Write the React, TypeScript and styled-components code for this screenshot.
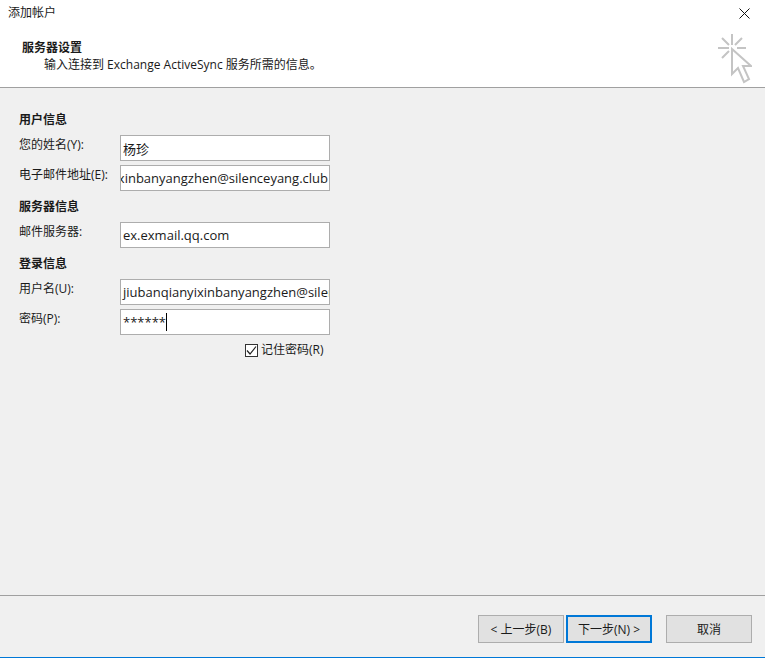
import React from 'react'
import styled, { createGlobalStyle } from 'styled-components'

const GlobalStyle = createGlobalStyle`
  html, body {
    margin: 0;
    padding: 0;
    background: #f0f0f0;
  }
  body {
    font-family: "Open Sans", "Noto Sans CJK SC", sans-serif;
    font-size: 12px;
    color: #1a1a1a;
  }
`

const App = () => {
  return (
    <>
      <GlobalStyle />
      <Dialog.Window>
        <Dialog.Top>
          <Dialog.TitleBar>
            <Dialog.Title>添加帐户</Dialog.Title>
            <Dialog.Close aria-label="close">
              <svg width="11" height="11" viewBox="0 0 11 11">
                <path d="M0.5 0.5L10.5 10.5M10.5 0.5L0.5 10.5" stroke="#111" strokeWidth="1" fill="none" />
              </svg>
            </Dialog.Close>
          </Dialog.TitleBar>
          <Dialog.Header>
            <Dialog.HeaderTitle>服务器设置</Dialog.HeaderTitle>
            <Dialog.HeaderSub>输入连接到 Exchange ActiveSync 服务所需的信息。</Dialog.HeaderSub>
            <Dialog.Cursor>
              <svg width="34" height="50" viewBox="0 0 34 50" fill="none">
                <g stroke="#c4c4c4" strokeWidth="2">
                  <path d="M14 0V11M0 14H11M19 14H28M4 4L11 11M24 4L17 11M4 24L11 17" />
                  <path d="M14 15V40L20 34L26 48L31 45L25 32H33Z" fill="#fff" />
                </g>
              </svg>
            </Dialog.Cursor>
          </Dialog.Header>
        </Dialog.Top>

        <Dialog.Body>
          <Form.Section>
            <Form.Heading>用户信息</Form.Heading>
            <Form.Row>
              <Form.Label>您的姓名(Y):</Form.Label>
              <Form.Field>杨珍</Form.Field>
            </Form.Row>
            <Form.Row>
              <Form.Label>电子邮件地址(E):</Form.Label>
              <Form.Field $scrolled>jiubanqianyixinbanyangzhen@silenceyang.club</Form.Field>
            </Form.Row>
          </Form.Section>

          <Form.Section>
            <Form.Heading>服务器信息</Form.Heading>
            <Form.Row>
              <Form.Label>邮件服务器:</Form.Label>
              <Form.Field>ex.exmail.qq.com</Form.Field>
            </Form.Row>
          </Form.Section>

          <Form.Section>
            <Form.Heading>登录信息</Form.Heading>
            <Form.Row>
              <Form.Label>用户名(U):</Form.Label>
              <Form.Field>jiubanqianyixinbanyangzhen@silenceyang.club</Form.Field>
            </Form.Row>
            <Form.Row>
              <Form.Label>密码(P):</Form.Label>
              <Form.Field>
                ******
                <Form.Caret />
              </Form.Field>
            </Form.Row>
            <Form.Remember>
              <Form.CheckBox>
                <svg width="11" height="11" viewBox="0 0 11 11" fill="none">
                  <path d="M1 5.5L4 9L10 1.5" stroke="#222" strokeWidth="1.2" />
                </svg>
              </Form.CheckBox>
              记住密码(R)
            </Form.Remember>
          </Form.Section>
        </Dialog.Body>

        <Dialog.Footer>
          <Dialog.Button>&lt; 上一步(B)</Dialog.Button>
          <Dialog.Button $primary>下一步(N) &gt;</Dialog.Button>
          <Dialog.Button $cancel>取消</Dialog.Button>
        </Dialog.Footer>
      </Dialog.Window>
    </>
  )
}

export default App

const Dialog = {
  Window: styled.div`
    width: 765px;
    height: 658px;
    display: flex;
    flex-direction: column;
    box-sizing: border-box;
    border-bottom: 1px solid #0078d7;
    background: #f0f0f0;
    overflow: hidden;
  `,
  Top: styled.div`
    height: 87px;
    flex-shrink: 0;
    background: #fff;
    border-bottom: 1px solid #a0a0a0;
  `,
  TitleBar: styled.div`
    height: 28px;
    display: flex;
    align-items: center;
    justify-content: space-between;
    padding: 0 15px 2px 8px;
    box-sizing: border-box;
  `,
  Title: styled.div`
    font-size: 12px;
    line-height: 16px;
  `,
  Close: styled.div`
    display: flex;
    margin-top: 1px;
  `,
  Header: styled.div`
    position: relative;
    padding: 11px 0 0 22px;
  `,
  HeaderTitle: styled.div`
    font-size: 12px;
    font-weight: 700;
    line-height: 17px;
  `,
  HeaderSub: styled.div`
    margin-left: 22px;
    font-size: 12px;
    line-height: 17px;
  `,
  Cursor: styled.div`
    position: absolute;
    top: 6px;
    left: 718px;
    display: flex;
  `,
  Body: styled.div`
    flex: 1;
    padding: 23px 0 0 19px;
    display: flex;
    flex-direction: column;
    gap: 7px;
  `,
  Footer: styled.div`
    height: 62px;
    flex-shrink: 0;
    box-sizing: border-box;
    border-top: 1px solid #a0a0a0;
    padding: 19px 13px 0 478px;
    display: flex;
    align-items: flex-start;
    gap: 2px;
  `,
  Button: styled.div<{ $primary?: boolean; $cancel?: boolean }>`
    width: 86px;
    height: 28px;
    box-sizing: border-box;
    display: flex;
    align-items: center;
    justify-content: center;
    white-space: pre;
    background: #e1e1e1;
    border: ${p => (p.$primary ? '2px solid #0078d7' : '1px solid #adadad')};
    margin-left: ${p => (p.$cancel ? '12px' : '0')};
    font-size: 12px;
  `
}

const Form = {
  Section: styled.div`
    display: flex;
    flex-direction: column;
    gap: 4px;
  `,
  Heading: styled.div`
    font-size: 12px;
    font-weight: 700;
    line-height: 17px;
    margin-bottom: 3px;
  `,
  Row: styled.div`
    display: flex;
    align-items: flex-start;
  `,
  Label: styled.div`
    width: 101px;
    flex-shrink: 0;
    font-size: 12px;
    line-height: 17px;
    margin-top: 1px;
    white-space: nowrap;
  `,
  Field: styled.div<{ $scrolled?: boolean }>`
    width: 210px;
    height: 26px;
    box-sizing: border-box;
    display: flex;
    align-items: center;
    justify-content: ${p => (p.$scrolled ? 'flex-end' : 'flex-start')};
    padding: 0 1px 0 2px;
    background: #fff;
    border: 1px solid #adadad;
    font-size: 13px;
    white-space: nowrap;
    overflow: hidden;
  `,
  Caret: styled.span`
    width: 1px;
    height: 18px;
    background: #000;
    flex-shrink: 0;
  `,
  Remember: styled.div`
    display: flex;
    align-items: center;
    gap: 3px;
    margin: 3px 0 0 226px;
    font-size: 12px;
    line-height: 16px;
  `,
  CheckBox: styled.span`
    width: 13px;
    height: 13px;
    box-sizing: border-box;
    display: flex;
    align-items: center;
    justify-content: center;
    background: #fff;
    border: 1px solid #333;
  `
}
